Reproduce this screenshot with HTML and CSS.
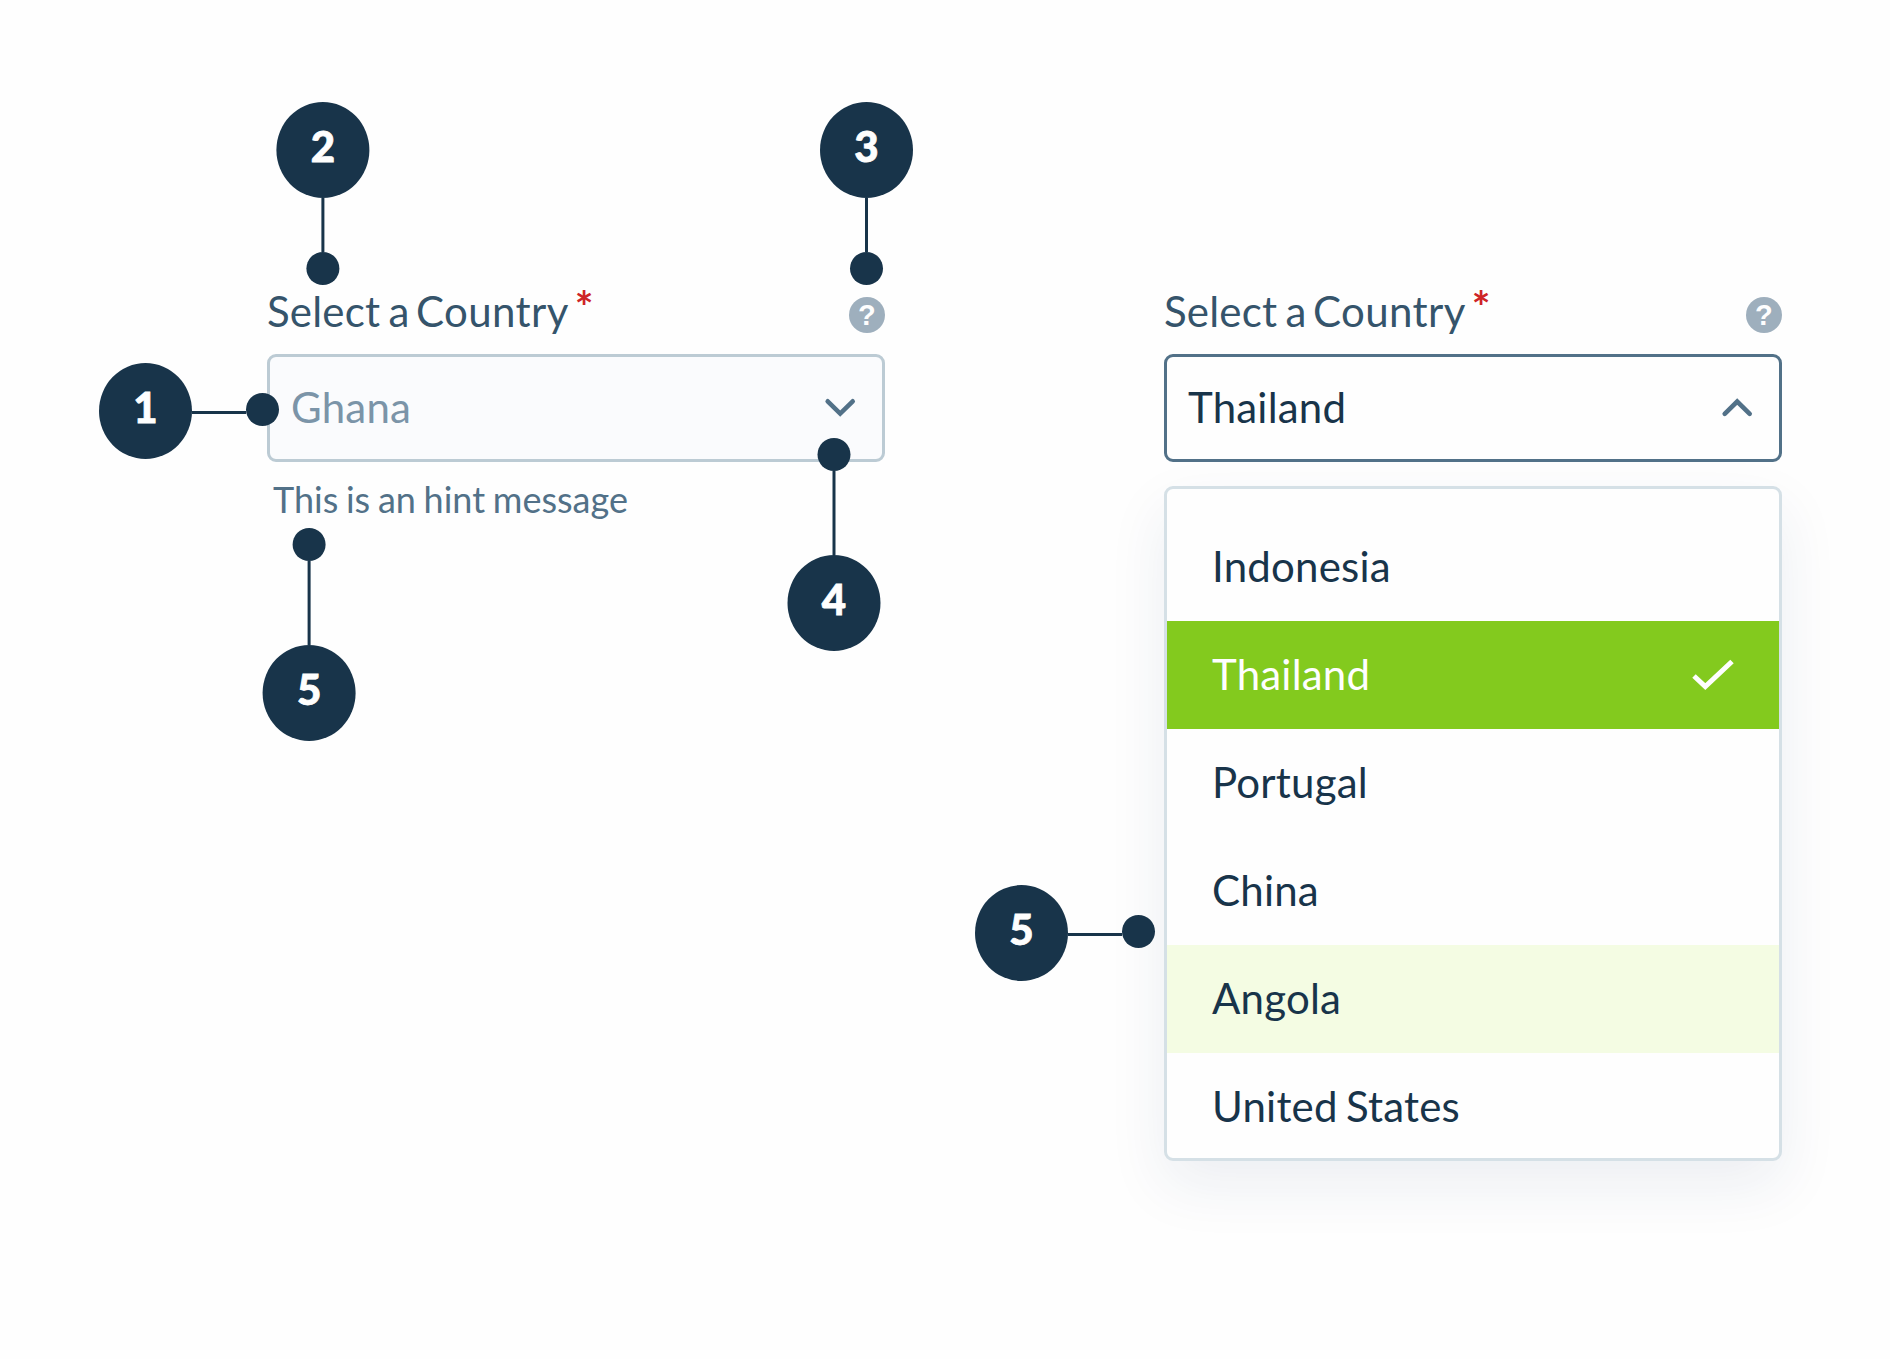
FILE: index.html
```html
<!DOCTYPE html>
<html lang="en">
<head>
<meta charset="utf-8">
<title>Select anatomy</title>
<link rel="stylesheet" href="styles.css">
</head>
<body>
<main class="board">
  <section class="field">
    <div class="field-head">
      <label class="label">Select a <span class="noun">Country</span><span class="required">*</span></label>
      <span class="help">?</span>
    </div>
    <div class="control control-disabled">
      <span>Ghana</span>
      <svg class="chevron" viewBox="0 0 36 36"><path d="M5.7 12.3 18.2 24.6 30.7 12.3"/></svg>
    </div>
    <p class="hint">This is an hint message</p>
    <div class="callout callout-row pin-control"><span class="badge">1</span><i class="line"></i><i class="dot"></i></div>
    <div class="callout callout-down pin-label"><span class="badge">2</span><i class="line"></i><i class="dot"></i></div>
    <div class="callout callout-down pin-help"><span class="badge">3</span><i class="line"></i><i class="dot"></i></div>
    <div class="callout callout-up pin-arrow"><span class="badge">4</span><i class="line"></i><i class="dot"></i></div>
    <div class="callout callout-up pin-hint"><span class="badge">5</span><i class="line"></i><i class="dot"></i></div>
  </section>

  <section class="field">
    <div class="field-head">
      <label class="label">Select a <span class="noun">Country</span><span class="required">*</span></label>
      <span class="help">?</span>
    </div>
    <div class="control control-open">
      <span>Thailand</span>
      <svg class="chevron" viewBox="0 0 36 36"><path d="M5.7 24.8 18.2 12.5 30.7 24.8"/></svg>
    </div>
    <ul class="menu">
      <li class="option">Indonesia</li>
      <li class="option option-selected">Thailand
        <svg class="check" viewBox="0 0 48 36"><path d="M5 20 16.3 30.6 43 5.5"/></svg>
      </li>
      <li class="option">Portugal</li>
      <li class="option">China</li>
      <li class="option option-hover">Angola</li>
      <li class="option">United States</li>
    </ul>
    <div class="callout callout-row pin-menu"><span class="badge">5</span><i class="line"></i><i class="dot"></i></div>
  </section>
</main>
</body>
</html>
```
FILE: styles.css
```css
* { box-sizing: border-box; }

body {
  margin: 0;
  background: #fefefe;
  color: #18344a;
  font-family: Lato, "Liberation Sans", sans-serif;
  font-size: 42px;
  line-height: 50px;
  letter-spacing: 0.2px;
  word-spacing: -2.6px;
}

.board {
  display: grid;
  grid-template-columns: 618px 618px;
  column-gap: 279px;
  align-items: start;
  height: 1359px;
  padding: 285px 0 0 267px;
}

.field { position: relative; }

.field-head {
  display: flex;
  justify-content: space-between;
  align-items: flex-start;
  height: 69px;
}

.label {
  padding-top: 1px;
  color: #35546b;
}

.noun {
  margin-left: -2px;
  letter-spacing: 0.4px;
}

.required {
  position: relative;
  top: -4px;
  margin-left: 6px;
  color: #ce2427;
  font-size: 44px;
  font-weight: 700;
  line-height: 1;
}

.help {
  width: 36px;
  height: 36px;
  margin-top: 12px;
  border-radius: 50%;
  background: #9eafbd;
  color: #fefefe;
  font: bold 29px/37px "Liberation Sans", sans-serif;
  text-align: center;
}

.control {
  display: flex;
  justify-content: space-between;
  align-items: center;
  height: 108px;
  padding: 0 24px 2px 21px;
  border: 3px solid;
  border-radius: 9px;
}

.control-disabled {
  border-color: #bccbd4;
  background: #fafbfd;
  color: #7b94a8;
}

.control-open {
  border-color: #527188;
  color: #18344a;
}

.chevron {
  width: 36px;
  height: 36px;
  fill: none;
  stroke: #527188;
  stroke-width: 4.6;
  stroke-linecap: round;
}

.hint {
  margin: 12px 0 0 6px;
  color: #527188;
  font-size: 36px;
  letter-spacing: 0;
  word-spacing: -1.5px;
}

.menu {
  height: 675px;
  margin: 24px 0 0;
  padding: 24px 0 0;
  overflow: hidden;
  border: 3px solid #d5e0e6;
  border-radius: 9px;
  background: #fefefe;
  box-shadow: 0 24px 60px rgba(24, 52, 100, 0.08);
  list-style: none;
}

.option {
  display: flex;
  justify-content: space-between;
  align-items: center;
  height: 108px;
  padding: 0 42px 2px 45px;
}

.option-selected {
  background: #83ca1e;
  color: #fefefe;
}

.option-hover { background: #f4fce3; }

.check {
  width: 48px;
  height: 36px;
  fill: none;
  stroke: #fefefe;
  stroke-width: 5;
}

/* Numbered markers that point at parts of the control */
.callout {
  position: absolute;
  display: flex;
  align-items: center;
}

.callout-down { flex-direction: column; }
.callout-up { flex-direction: column-reverse; }

.badge {
  width: 93px;
  height: 96px;
  padding-bottom: 7px;
  border-radius: 50%;
  background: #18344a;
  color: #fefefe;
  font-weight: 900;
  line-height: 88px;
  letter-spacing: 0;
  text-align: center;
  -webkit-text-stroke: 0.8px #fefefe;
}

.line {
  width: 3px;
  height: 54px;
  background: #18344a;
}

.callout-up .line { height: 84px; }

.callout-row .line {
  width: 54px;
  height: 3px;
  margin-top: 3px;
}

.dot {
  width: 33px;
  height: 33px;
  border-radius: 50%;
  background: #18344a;
}

.callout-row .dot { margin-bottom: 3px; }

.pin-control { left: -168px; top: 78px; }
.pin-label { left: 9px; top: -183px; transform: translateX(0.4px); }
.pin-help { left: 553px; top: -183px; }
.pin-arrow { left: 520px; top: 153px; transform: translateX(0.5px); }
.pin-hint { left: -5px; top: 243px; transform: translateX(0.6px); }
.pin-menu { left: -189px; top: 600px; }
```
